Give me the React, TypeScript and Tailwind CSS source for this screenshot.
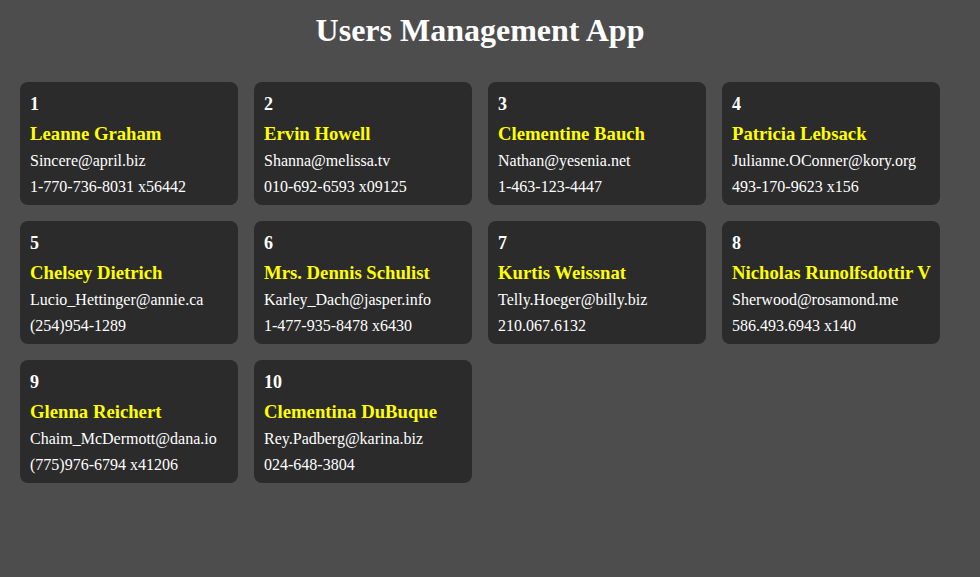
const users = [
  { id: 1, name: 'Leanne Graham', email: 'Sincere@april.biz', phone: '1-770-736-8031 x56442' },
  { id: 2, name: 'Ervin Howell', email: 'Shanna@melissa.tv', phone: '010-692-6593 x09125' },
  { id: 3, name: 'Clementine Bauch', email: 'Nathan@yesenia.net', phone: '1-463-123-4447' },
  { id: 4, name: 'Patricia Lebsack', email: 'Julianne.OConner@kory.org', phone: '493-170-9623 x156' },
  { id: 5, name: 'Chelsey Dietrich', email: 'Lucio_Hettinger@annie.ca', phone: '(254)954-1289' },
  { id: 6, name: 'Mrs. Dennis Schulist', email: 'Karley_Dach@jasper.info', phone: '1-477-935-8478 x6430' },
  { id: 7, name: 'Kurtis Weissnat', email: 'Telly.Hoeger@billy.biz', phone: '210.067.6132' },
  { id: 8, name: 'Nicholas Runolfsdottir V', email: 'Sherwood@rosamond.me', phone: '586.493.6943 x140' },
  { id: 9, name: 'Glenna Reichert', email: 'Chaim_McDermott@dana.io', phone: '(775)976-6794 x41206' },
  { id: 10, name: 'Clementina DuBuque', email: 'Rey.Padberg@karina.biz', phone: '024-648-3804' },
];

function UserCard({ user }: { user: (typeof users)[number] }) {
  return (
    <div className="w-[218px] h-[123px] bg-[#2b2b2b] rounded-lg px-[10px] pt-[12px] flex flex-col">
      <h3 className="text-[18px] leading-[20px] font-bold text-white">{user.id}</h3>
      <h2 className="mt-[8px] text-[18.72px] leading-[24px] font-bold text-[#ffff00] whitespace-nowrap">{user.name}</h2>
      <p className="mt-[2px] text-[16px] leading-[26px] text-white">{user.email}</p>
      <p className="text-[16px] leading-[26px] text-white">{user.phone}</p>
    </div>
  );
}

export default function App() {
  return (
    <div className="min-h-[577px] bg-[#4d4d4d] font-['Liberation_Serif',serif]">
      <div className="w-[960px] px-[20px] pt-[12px]">
        <h1 className="text-[32px] leading-[37px] font-bold text-white text-center mb-[33px]">
          Users Management App
        </h1>
        <div className="flex flex-wrap gap-[16px]">
          {users.map(user => (
            <UserCard key={user.id} user={user} />
          ))}
        </div>
      </div>
    </div>
  );
}
